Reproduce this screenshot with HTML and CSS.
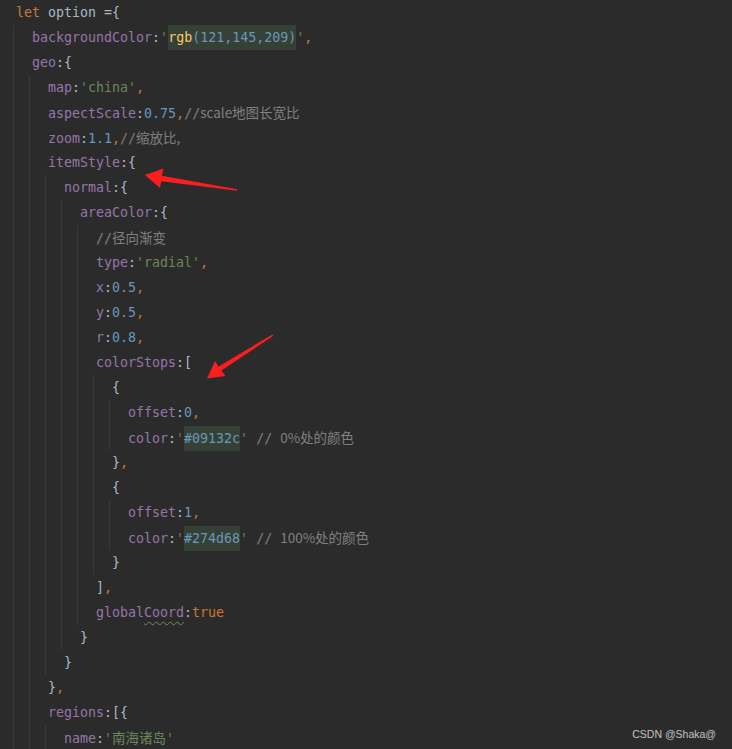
FILE: index.html
```html
<!DOCTYPE html>
<html lang="zh">
<head>
    <meta charset="UTF-8">
    <title>option.js</title>
    <link rel="stylesheet" href="styles.css">
</head>
<body>
    <div class="editor">
        <div class="ln"><span class="kw">let</span> option ={</div>
        <div class="blk">
            <div class="ln"><span class="pr">backgroundColor</span>:<span class="st">'</span><span class="hl"><span class="fn">rgb</span><span class="nm">(121,145,209)</span></span><span class="st">'</span><span class="kw">,</span></div>
            <div class="ln"><span class="pr">geo</span>:{</div>
            <div class="blk">
                <div class="ln"><span class="pr">map</span>:<span class="st">'china'</span><span class="kw">,</span></div>
                <div class="ln"><span class="pr">aspectScale</span>:<span class="nm">0.75</span><span class="kw">,</span><span class="cm">//<span class="cjk">scale地图长宽比</span></span></div>
                <div class="ln"><span class="pr">zoom</span>:<span class="nm">1.1</span><span class="kw">,</span><span class="cm">//<span class="cjk">缩放比,</span></span></div>
                <div class="ln"><span class="pr">itemStyle</span>:{</div>
                <div class="blk">
                    <div class="ln"><span class="pr">normal</span>:{</div>
                    <div class="blk">
                        <div class="ln"><span class="pr">areaColor</span>:{</div>
                        <div class="blk">
                            <div class="ln"><span class="cm">//<span class="cjk">径向渐变</span></span></div>
                            <div class="ln"><span class="pr">type</span>:<span class="st">'radial'</span><span class="kw">,</span></div>
                            <div class="ln"><span class="pr">x</span>:<span class="nm">0.5</span><span class="kw">,</span></div>
                            <div class="ln"><span class="pr">y</span>:<span class="nm">0.5</span><span class="kw">,</span></div>
                            <div class="ln"><span class="pr">r</span>:<span class="nm">0.8</span><span class="kw">,</span></div>
                            <div class="ln"><span class="pr">colorStops</span>:[</div>
                            <div class="blk">
                                <div class="ln">{</div>
                                <div class="blk">
                                    <div class="ln"><span class="pr">offset</span>:<span class="nm">0</span><span class="kw">,</span></div>
                                    <div class="ln"><span class="pr">color</span>:<span class="st">'</span><span class="hl nm">#09132c</span><span class="st">'</span> <span class="cm">// <span class="cjk">0%处的颜色</span></span></div>
                                </div>
                                <div class="ln">}<span class="kw">,</span></div>
                                <div class="ln">{</div>
                                <div class="blk">
                                    <div class="ln"><span class="pr">offset</span>:<span class="nm">1</span><span class="kw">,</span></div>
                                    <div class="ln"><span class="pr">color</span>:<span class="st">'</span><span class="hl nm">#274d68</span><span class="st">'</span> <span class="cm">// <span class="cjk">100%处的颜色</span></span></div>
                                </div>
                                <div class="ln">}</div>
                            </div>
                            <div class="ln">]<span class="kw">,</span></div>
                            <div class="ln"><span class="pr">global<span class="typo">Coord</span></span>:<span class="kw">true</span></div>
                        </div>
                        <div class="ln">}</div>
                    </div>
                    <div class="ln">}</div>
                </div>
                <div class="ln">}<span class="kw">,</span></div>
                <div class="ln"><span class="pr">regions</span>:[{</div>
                <div class="blk">
                    <div class="ln"><span class="pr">name</span>:<span class="st">'<span class="cjk">南海诸岛</span>'</span></div>
                </div>
            </div>
        </div>
    </div>

    <svg class="marks" width="732" height="749" viewBox="0 0 732 749">
        <polygon points="145,175 163.5,168.5 161.9,175.8 237,189.3 237,190.7 161.2,181.2 160,188"/>
        <polygon points="207,378.5 215,361 218.6,366.4 272.4,334.4 273.4,335.8 221.4,370.6 225.5,376"/>
    </svg>

    <div class="watermark">CSDN @Shaka@</div>
</body>
</html>
```

FILE: styles.css
```css
body {
    margin: 0;
    width: 732px;
    height: 749px;
    overflow: hidden;
    background: #2b2b2b;
    position: relative;
}
.editor {
    padding-left: 13px;
    font-family: "DejaVu Sans Mono", "Liberation Mono", monospace;
    font-size: 13.3px;
    color: #a9b7c6;
}
.ln {
    height: 25px;
    line-height: 25px;
    padding-left: 3px;
    white-space: pre;
}
.blk {
    border-left: 1px solid #393939;
    padding-left: 15px;
}
.kw {
    color: #cc7832;
}
.pr {
    color: #9876aa;
}
.st {
    color: #6a8759;
}
.nm {
    color: #6897bb;
}
.fn {
    color: #ffc66d;
}
.cm {
    color: #808080;
}
.cjk {
    font-family: "Noto Sans CJK SC", sans-serif;
    font-size: 13.5px;
}
.hl {
    display: inline-block;
    height: 25px;
    background: #364135;
}
.typo {
    text-decoration: underline wavy #629755;
    text-decoration-thickness: 1px;
    text-underline-offset: 4px;
}
.marks {
    position: absolute;
    top: 0;
    left: 0;
    pointer-events: none;
}
.marks polygon {
    fill: #fa1e1e;
}
.watermark {
    position: absolute;
    right: 16px;
    bottom: 9px;
    font-family: "Liberation Sans", Arial, sans-serif;
    font-size: 10.5px;
    color: #c4c4c4;
}
```
